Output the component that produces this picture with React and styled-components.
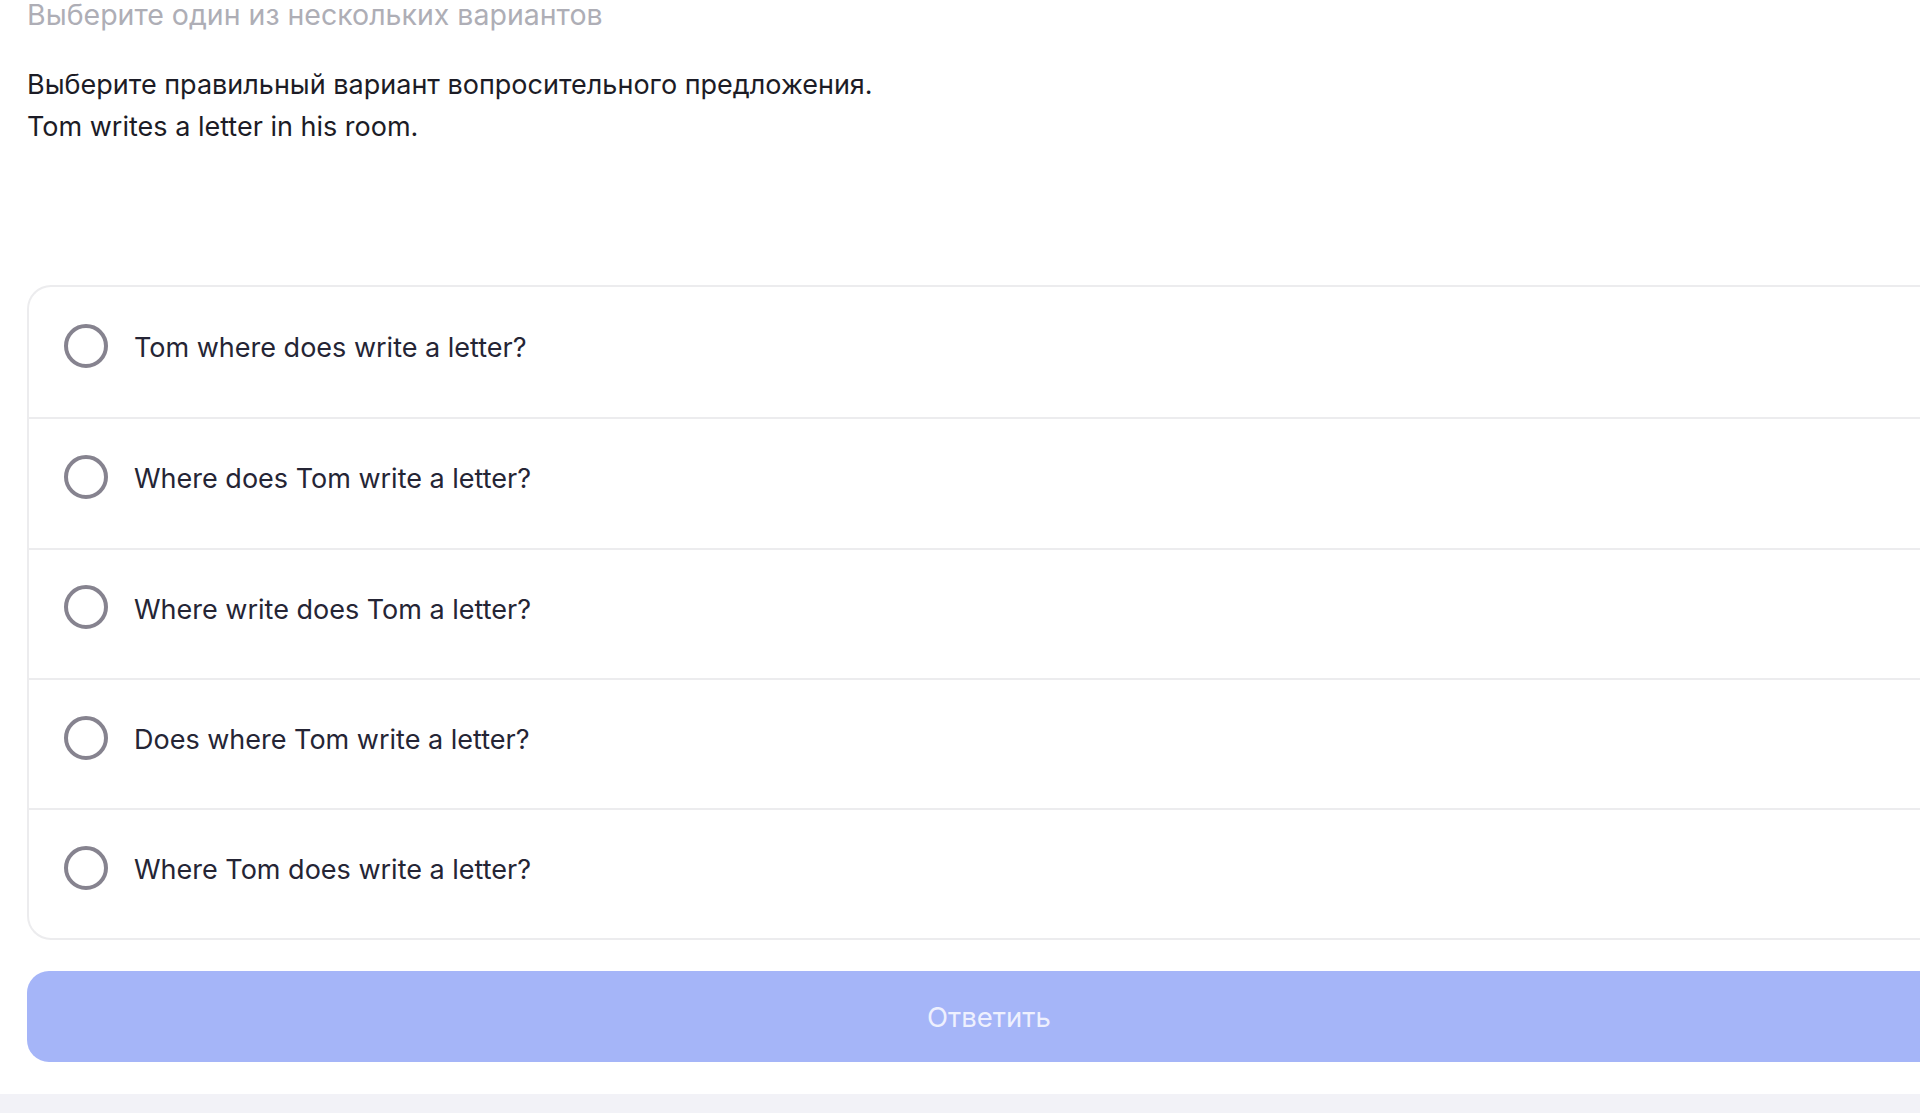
import React from "react";
import styled, { createGlobalStyle } from "styled-components";

const GlobalStyle = createGlobalStyle`
  html, body {
    margin: 0;
    padding: 0;
    background: #ffffff;
    overflow: hidden;
  }
  body {
    font-family: Inter, "Noto Sans", sans-serif;
    -webkit-font-smoothing: antialiased;
  }
`;

const options = [
  "Tom where does write a letter?",
  "Where does Tom write a letter?",
  "Where write does Tom a letter?",
  "Does where Tom write a letter?",
  "Where Tom does write a letter?",
];

function App() {
  return (
    <Page>
      <GlobalStyle />
      <Content>
        <Hint>Выберите один из нескольких вариантов</Hint>
        <Question>
          <p>Выберите правильный вариант вопросительного предложения.</p>
          <p>Tom writes a letter in his room.</p>
        </Question>
        <OptionList>
          {options.map((text) => (
            <Option key={text}>
              <Radio />
              <OptionText>{text}</OptionText>
            </Option>
          ))}
        </OptionList>
        <SubmitButton disabled>Ответить</SubmitButton>
      </Content>
      <Footer />
    </Page>
  );
}

const Page = styled.div`
  width: 1920px;
  height: 1113px;
  display: flex;
  flex-direction: column;
  overflow: hidden;
`;

const Content = styled.div`
  width: 1924px;
  margin-top: -5px;
  padding-left: 27px;
  display: flex;
  flex-direction: column;
  flex: 1;
`;

const Hint = styled.div`
  font-size: 28.5px;
  line-height: 40px;
  color: #aeaeb6;
  font-weight: 400;
`;

const Question = styled.div`
  margin-top: 29px;
  font-size: 27px;
  line-height: 42px;
  color: #1c1c26;

  p {
    margin: 0;
  }
`;

const OptionList = styled.div`
  margin-top: 137px;
  border: 2px solid #ececee;
  border-right: none;
  border-radius: 24px 0 0 24px;
  display: flex;
  flex-direction: column;
`;

const Option = styled.label`
  height: 130.3px;
  display: flex;
  align-items: center;
  gap: 26px;
  padding-left: 35px;
  box-sizing: border-box;
  cursor: pointer;

  & + & {
    border-top: 2px solid #ececee;
  }
`;

const Radio = styled.span`
  width: 44px;
  height: 44px;
  box-sizing: border-box;
  border-radius: 50%;
  border: 4px solid #86838f;
  flex-shrink: 0;
  margin-top: -13px;
`;

const OptionText = styled.span`
  font-size: 27px;
  color: #252535;
  margin-top: -9px;
`;

const SubmitButton = styled.button`
  margin-top: 31px;
  height: 91px;
  border: none;
  border-radius: 22px;
  background: #a5b5f8;
  color: #eef0fe;
  font-family: Inter, "Noto Sans", sans-serif;
  font-size: 27.5px;
  width: 100%;
`;

const Footer = styled.div`
  height: 19px;
  background: #f2f2f7;
  flex-shrink: 0;
`;

export default App;
